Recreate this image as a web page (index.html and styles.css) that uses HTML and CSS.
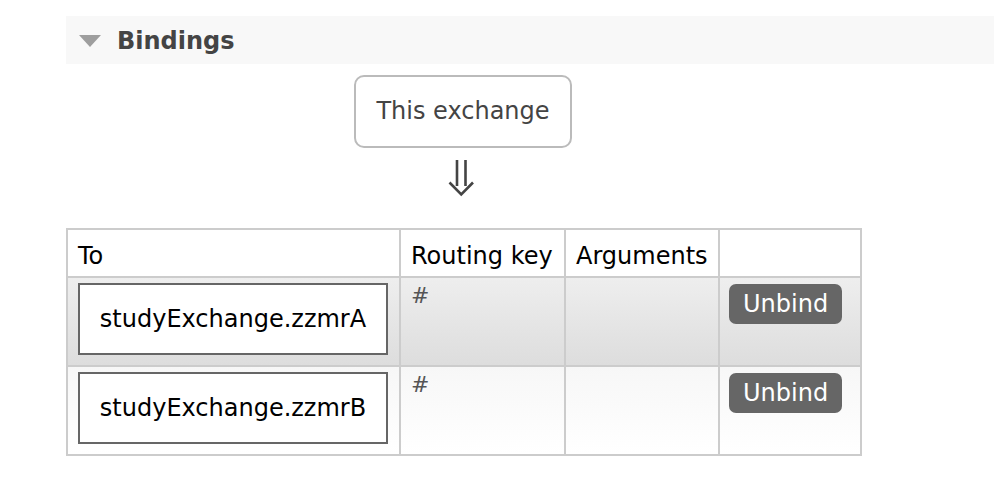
FILE: index.html
```html
<!DOCTYPE html>
<html>
<head>
<meta charset="utf-8">
<link rel="stylesheet" href="styles.css">
</head>
<body>
<div class="page">
  <div class="section-head">
    <span class="tri"></span>
    <h2>Bindings</h2>
  </div>
  <div class="bindings">
    <div class="flow">
      <div class="exchange-box">This exchange</div>
      <svg class="down-arrow" width="28" height="38" viewBox="0 0 28 38">
        <path d="M9 1 V27 M17.5 1 V27" stroke="#444" stroke-width="2.6" fill="none"/>
        <path d="M1.5 23.5 L13.25 35.5 L25 23.5" stroke="#444" stroke-width="2.6" fill="none"/>
      </svg>
    </div>
    <table class="list">
      <colgroup>
        <col class="c-to"><col class="c-key"><col class="c-args"><col class="c-act">
      </colgroup>
      <thead>
        <tr><th>To</th><th>Routing key</th><th>Arguments</th><th></th></tr>
      </thead>
      <tbody>
        <tr class="alt1">
          <td><span class="queue">studyExchange.zzmrA</span></td>
          <td class="key">#</td>
          <td></td>
          <td class="act"><button class="btn">Unbind</button></td>
        </tr>
        <tr class="alt2">
          <td><span class="queue">studyExchange.zzmrB</span></td>
          <td class="key">#</td>
          <td></td>
          <td class="act"><button class="btn">Unbind</button></td>
        </tr>
      </tbody>
    </table>
  </div>
</div>
</body>
</html>
```
FILE: styles.css
```css
* { box-sizing: border-box; }
html, body { background: #fff; }
body {
  margin: 0;
  font-family: "DejaVu Sans", Verdana, sans-serif;
  font-size: 24px;
  color: #000;
}
.page {
  padding: 16px 0 0 66px;
}
.section-head {
  display: flex;
  align-items: center;
  height: 48px;
  background: #f8f8f8;
  padding-left: 13px;
  gap: 16px;
}
.tri {
  width: 0;
  height: 0;
  border-left: 11px solid transparent;
  border-right: 11px solid transparent;
  border-top: 12px solid #9e9e9e;
  margin-top: 2px;
}
.section-head h2 {
  margin: 0;
  padding-top: 2px;
  font-size: 24px;
  font-weight: bold;
  color: #444;
  line-height: 28px;
}
.bindings {
  width: 794px;
}
.flow {
  display: flex;
  flex-direction: column;
  align-items: center;
  padding-top: 11px;
}
.exchange-box {
  border: 2px solid #bbb;
  border-radius: 10px;
  padding: 20px 20px;
  line-height: 29px;
  color: #444;
  background: #fff;
}
.down-arrow {
  display: block;
  margin-top: 11px;
  margin-left: -2px;
}
.list {
  margin-top: 31px;
  width: 794px;
  border-collapse: collapse;
  table-layout: fixed;
}
.c-to { width: 333px; }
.c-key { width: 165px; }
.c-args { width: 154px; }
.c-act { width: 142px; }
.list th, .list td {
  border: 2px solid #ccc;
  text-align: left;
  vertical-align: top;
  white-space: nowrap;
}
.list th {
  font-weight: normal;
  padding: 12px 10px 6px;
  line-height: 28px;
  background: #fff;
}
.list td {
  padding: 5px 10px 10px 10px;
  line-height: 28px;
}
.alt1 td { background: linear-gradient(#eeeeee, #dddddd); }
.alt2 td { background: linear-gradient(#f7f7f7, #ffffff); }
.queue {
  display: block;
  width: 310px;
  border: 2px solid #666;
  background: #fff;
  text-align: center;
  padding: 20px 0;
  line-height: 28px;
}
.list td.key {
  font-size: 22px;
  color: #555;
  padding-top: 4px;
  padding-left: 10px;
}
.list td.act {
  padding-left: 9px;
}
.btn {
  font-family: inherit;
  font-size: 24px;
  color: #fff;
  background: #666;
  border: none;
  border-radius: 7px;
  padding: 6px 14px;
  line-height: 28px;
  margin: 1px 0 0;
}
```
